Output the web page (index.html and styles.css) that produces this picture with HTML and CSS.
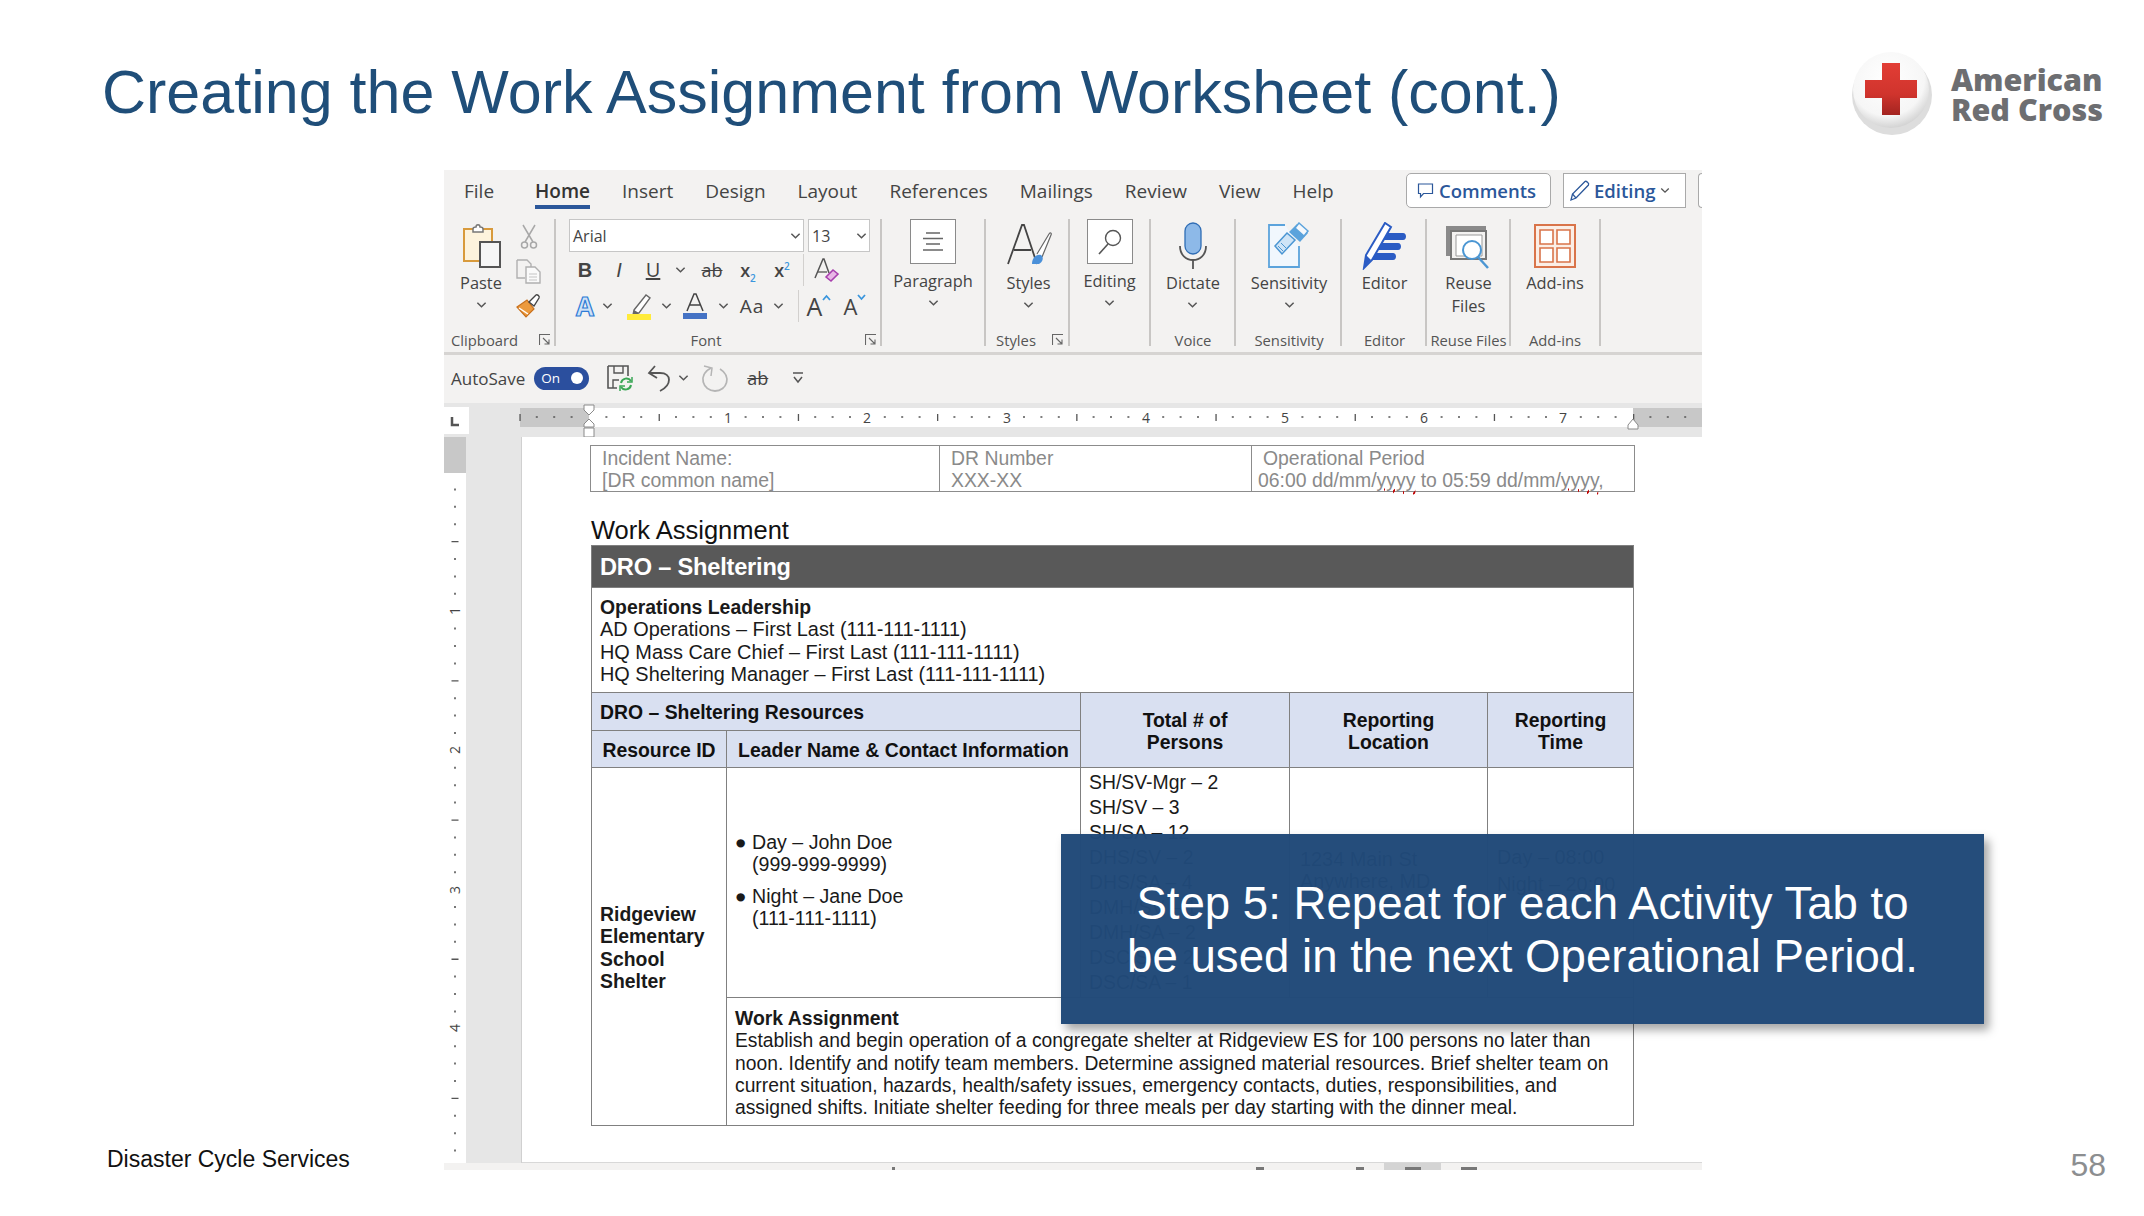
FILE: index.html
```html
<!DOCTYPE html>
<html lang="en">
<head>
    <meta charset="UTF-8">
    <title>Creating the Work Assignment from Worksheet (cont.)</title>
    <link rel="stylesheet" href="styles.css">
</head>
<body>
<svg class="defs" width="0" height="0">
    <symbol id="chev" viewBox="0 0 12 8"><path d="M1.5 1.5 6 6l4.5-4.5" fill="none" stroke="#555" stroke-width="1.6"/></symbol>
    <symbol id="launch" viewBox="0 0 12 12"><path d="M.5 11V.5H11M4 4l6 6M10 5.5V10H5.5" fill="none" stroke="#666" stroke-width="1.1"/></symbol>
</svg>
<div class="slide">
    <header class="slide-top">
        <h1>Creating the Work Assignment from Worksheet (cont.)</h1>
        <div class="logo">
            <svg width="92" height="92" viewBox="0 0 92 92">
                <defs>
                    <radialGradient id="ball" cx="45%" cy="35%" r="70%"><stop offset="0" stop-color="#fff"/><stop offset=".7" stop-color="#f6f6f6"/><stop offset="1" stop-color="#c9c9c9"/></radialGradient>
                    <linearGradient id="red" x1="0" y1="0" x2="0" y2="1"><stop offset="0" stop-color="#e23d35"/><stop offset=".6" stop-color="#d0342d"/><stop offset="1" stop-color="#a32420"/></linearGradient>
                </defs>
                <ellipse cx="46" cy="50" rx="40" ry="40" fill="#ddd"/>
                <circle cx="45" cy="45" r="38" fill="url(#ball)"/>
                <path d="M36 18h18v17h17v18H54v17H36V53H19V35h17z" fill="url(#red)"/>
            </svg>
            <div class="logo-name">American<br>Red Cross</div>
        </div>
    </header>

    <div class="footer-note">Disaster Cycle Services</div>

    <section class="word">
        <nav class="tabs">
            <span class="tab tab-file">File</span>
            <span class="tab tab-home">Home</span>
            <span class="tab">Insert</span>
            <span class="tab">Design</span>
            <span class="tab">Layout</span>
            <span class="tab">References</span>
            <span class="tab">Mailings</span>
            <span class="tab">Review</span>
            <span class="tab">View</span>
            <span class="tab">Help</span>
            <span class="pill pill-comments">
                <svg width="17" height="17" viewBox="0 0 17 17"><path d="M1.5 2h14v9.500H6.500L3.500 15v-3.500h-2z" fill="none" stroke="#2b579a" stroke-width="1.2"/></svg>
                Comments
            </span>
            <span class="pill pill-editing">
                <svg width="24" height="24" viewBox="0 0 24 24"><path d="M3 21l1.500-6L17 2.500c1-1 4.500 2 3.500 3.500L8 19z" fill="none" stroke="#2b579a" stroke-width="1.3"/><path d="M4.500 15 8 19" stroke="#2b579a" stroke-width="1.2"/></svg>
                Editing
                <svg class="chev-sm" width="10" height="7"><use href="#chev"/></svg>
            </span>
            <span class="pill-stub"></span>
        </nav>

        <div class="ribbon">
            <div class="group group-clip">
                <div class="group-body clip-body">
                    <div class="big">
                        <svg width="42" height="48" viewBox="0 0 42 48">
                            <path d="M4 7h28v32H4z" fill="#fdf3dd" stroke="#d89a3c" stroke-width="2"/>
                            <path d="M13 7c0-2 2-2 3-2 0-3 4-3 4 0 1 0 3 0 3 2v3H13z" fill="#fff" stroke="#777" stroke-width="1.500"/>
                            <path d="M20 20h20v25H20z" fill="#f6f6f6" stroke="#555" stroke-width="2"/>
                        </svg>
                        <span class="big-label">Paste</span>
                        <svg class="chev" width="11" height="8"><use href="#chev"/></svg>
                    </div>
                    <div class="clip-stack">
                        <svg width="18" height="26" viewBox="0 0 18 26"><path d="M3 1l10 17M15 1 5 18" fill="none" stroke="#a8a8a8" stroke-width="1.500"/><circle cx="4.500" cy="21" r="3" fill="none" stroke="#a8a8a8" stroke-width="1.500"/><circle cx="13.500" cy="21" r="3" fill="none" stroke="#a8a8a8" stroke-width="1.500"/></svg>
                        <svg width="25" height="25" viewBox="0 0 25 25"><path d="M1 1h10l4 4v4M1 1v18h8" fill="none" stroke="#b0b0b0" stroke-width="1.400"/><path d="M10 8h9l5 5v11H10z" fill="#fafafa" stroke="#b0b0b0" stroke-width="1.400"/><path d="M13 15h8M13 18h8M13 21h8" stroke="#c4c4c4"/></svg>
                        <svg width="25" height="25" viewBox="0 0 25 25"><path d="M1 14 11 7l7 9-8 8z" fill="#ec9a3d" stroke="#c8701c" stroke-width="1.200"/><path d="M3 15l9 6" stroke="#fff" stroke-width="1.500"/><path d="M13 9l7-7c1-1 4 1 3 3l-5 8z" fill="#fff" stroke="#444" stroke-width="1.400"/></svg>
                    </div>
                </div>
                <div class="group-label clip-label">Clipboard<svg class="launch" width="12" height="12"><use href="#launch"/></svg></div>
            </div>

            <div class="group group-font">
                <div class="group-body font-body">
                    <div class="combo-row">
                        <span class="combo combo-name">Arial<svg width="11" height="8"><use href="#chev"/></svg></span>
                        <span class="combo combo-size">13<svg width="11" height="8"><use href="#chev"/></svg></span>
                    </div>
                    <div class="font-row row-a">
                        <span class="glyph bold">B</span>
                        <span class="glyph ital">I</span>
                        <span class="glyph under">U</span>
                        <svg width="11" height="8"><use href="#chev"/></svg>
                        <span class="glyph strike">ab</span>
                        <span class="glyph subs">x<sub>2</sub></span>
                        <span class="glyph subs">x<sup>2</sup></span>
                        <i class="mini-sep"></i>
                        <svg width="26" height="26" viewBox="0 0 26 26"><path d="M1 21 9 2h1l5 14" fill="none" stroke="#555" stroke-width="1.500"/><path d="M4 15h9" stroke="#555" stroke-width="1.300"/><path d="M12 20l7-7 5 4-7 7z" fill="#e8b7e6" stroke="#a83fae" stroke-width="1.600"/></svg>
                    </div>
                    <div class="font-row row-b">
                        <span class="glyph fx-a">A</span>
                        <svg width="11" height="8"><use href="#chev"/></svg>
                        <svg class="hl" width="26" height="28" viewBox="0 0 26 28"><path d="M7 18 19 3l4 3-11 15-6 2z" fill="#fff" stroke="#666" stroke-width="1.400"/><path d="M7 18l5 3-6 2z" fill="#666"/><rect y="22" width="24" height="6" fill="#ffeb3b"/></svg>
                        <svg width="11" height="8"><use href="#chev"/></svg>
                        <svg width="26" height="26" viewBox="0 0 26 26"><path d="M5 18 12 1h2l7 17M8 12h10" fill="none" stroke="#444" stroke-width="1.500"/><rect x="1" y="20" width="24" height="6" fill="#4472c4"/></svg>
                        <svg width="11" height="8"><use href="#chev"/></svg>
                        <span class="glyph aa">Aa</span>
                        <svg width="11" height="8"><use href="#chev"/></svg>
                        <i class="mini-sep"></i>
                        <span class="glyph grow">A<svg width="9" height="7" viewBox="0 0 9 7"><path d="M1 6l3.500-4L8 6" fill="none" stroke="#3a96dd" stroke-width="1.800"/></svg></span>
                        <span class="glyph shrink">A<svg width="9" height="7" viewBox="0 0 9 7"><path d="M1 1l3.500 4L8 1" fill="none" stroke="#3a96dd" stroke-width="1.800"/></svg></span>
                    </div>
                </div>
                <div class="group-label font-label">Font<svg class="launch" width="12" height="12"><use href="#launch"/></svg></div>
            </div>

            <div class="group group-para">
                <div class="group-body">
                    <div class="box-btn">
                        <svg width="22" height="22" viewBox="0 0 22 22"><path d="M4 2h14M1 7.500h20M4 13h14M1 19h20" stroke="#666" stroke-width="1.600"/></svg>
                    </div>
                    <span class="big-label boxed">Paragraph</span>
                    <svg class="chev" width="11" height="8"><use href="#chev"/></svg>
                </div>
                <div class="group-label"></div>
            </div>

            <div class="group group-styles">
                <div class="group-body">
                    <div class="big">
                        <svg width="46" height="48" viewBox="0 0 46 48"><path d="M2 42 16 3h2l13 39M8 28h17" fill="none" stroke="#444" stroke-width="1.800"/><path d="M31 32 43 12c1-2 3-1 2 1L36 35" fill="#fff" stroke="#666" stroke-width="1.200"/><path d="M26 42c0-6 4-10 9-9 3 2 2 7-2 9z" fill="#4a90d9"/></svg>
                        <span class="big-label">Styles</span>
                        <svg class="chev" width="11" height="8"><use href="#chev"/></svg>
                    </div>
                </div>
                <div class="group-label styles-label">Styles<svg class="launch" width="12" height="12"><use href="#launch"/></svg></div>
            </div>

            <div class="group group-edit">
                <div class="group-body">
                    <div class="box-btn">
                        <svg width="26" height="28" viewBox="0 0 26 28"><circle cx="16" cy="10" r="7.500" fill="none" stroke="#555" stroke-width="1.400"/><path d="M11 16 2 26" stroke="#555" stroke-width="1.600"/></svg>
                    </div>
                    <span class="big-label boxed">Editing</span>
                    <svg class="chev" width="11" height="8"><use href="#chev"/></svg>
                </div>
                <div class="group-label"></div>
            </div>

            <div class="group group-voice">
                <div class="group-body">
                    <div class="big">
                        <svg width="30" height="48" viewBox="0 0 30 48"><rect x="7" y="1" width="16" height="31" rx="8" fill="#8db9e8" stroke="#2f6db5" stroke-width="1.300"/><path d="M2 24c0 9 6 14 13 14s13-5 13-14" fill="none" stroke="#555" stroke-width="1.800"/><path d="M15 38v9" stroke="#555" stroke-width="1.800"/></svg>
                        <span class="big-label">Dictate</span>
                        <svg class="chev" width="11" height="8"><use href="#chev"/></svg>
                    </div>
                </div>
                <div class="group-label">Voice</div>
            </div>

            <div class="group group-sens">
                <div class="group-body">
                    <div class="big">
                        <svg width="44" height="48" viewBox="0 0 44 48"><path d="M18 3H2v42h30V24" fill="#f1f7fd" stroke="#5ba3dc" stroke-width="1.800"/><path d="M8 24 20 11l8 7-13 14z" fill="#cfe4f6" stroke="#4b96d3" stroke-width="1.500"/><path d="M11 24l5 5M14 21l5 5" stroke="#4b96d3"/><path d="M22 10 30 2l11 9-8 9z" fill="#5ba3dc"/><path d="M32 1l9 8-4 5-9-8z" fill="#f4f8fc" stroke="#5ba3dc" stroke-width="1.500"/></svg>
                        <span class="big-label">Sensitivity</span>
                        <svg class="chev" width="11" height="8"><use href="#chev"/></svg>
                    </div>
                </div>
                <div class="group-label">Sensitivity</div>
            </div>

            <div class="group group-editor">
                <div class="group-body">
                    <div class="big">
                        <svg width="46" height="48" viewBox="0 0 46 48"><path d="M2 46 4 33 23 1l6 4L10 38z" fill="#fff" stroke="#2b5cc4" stroke-width="2"/><path d="M2 46l7-8-5-5z" fill="#2b5cc4"/><path d="M26 11h15c4 0 4 7 0 7H22zM20 21h16c4 0 4 7 0 7H16zM14 31h17c4 0 4 7 0 7H10z" fill="#2b5cc4"/></svg>
                        <span class="big-label">Editor</span>
                    </div>
                </div>
                <div class="group-label">Editor</div>
            </div>

            <div class="group group-reuse">
                <div class="group-body">
                    <div class="big">
                        <svg width="46" height="48" viewBox="0 0 46 48"><path d="M1 4h40v4H5v26H1z" fill="#8a8a8a"/><path d="M6 9h35v28H6z" fill="#f3f2f1" stroke="#777" stroke-width="2"/><path d="M11 13h26v21H11z" fill="#fff" stroke="#999"/><circle cx="27" cy="28" r="9" fill="#fff" stroke="#4b96d3" stroke-width="2"/><path d="M33 35l10 11" stroke="#4b96d3" stroke-width="2.500"/></svg>
                        <span class="big-label">Reuse<br>Files</span>
                    </div>
                </div>
                <div class="group-label">Reuse Files</div>
            </div>

            <div class="group group-addins">
                <div class="group-body">
                    <div class="big">
                        <svg class="addins-icon" width="42" height="44" viewBox="0 0 42 44"><path d="M1 1h40v42H1z" fill="#fbeee6" stroke="#d9744a" stroke-width="2"/><path d="M6 6h13v14H6zM23 6h13v14H23zM6 24h13v14H6zM23 24h13v14H23z" fill="#fff" stroke="#d9744a" stroke-width="1.600"/></svg>
                        <span class="big-label">Add-ins</span>
                    </div>
                </div>
                <div class="group-label">Add-ins</div>
            </div>
        </div>

        <div class="qat">
            <span class="qat-name">AutoSave</span>
            <span class="toggle">On<i></i></span>
            <svg class="q-save" width="28" height="28" viewBox="0 0 28 28"><path d="M2 2h20v10M2 2v22h9" fill="none" stroke="#555" stroke-width="1.600"/><path d="M8 2v7h9V2M7 24v-8h6" fill="none" stroke="#555" stroke-width="1.400"/><path d="M15 19a5.500 5.500 0 0 1 10-2M25 21a5.500 5.500 0 0 1-10 2" fill="none" stroke="#3aa655" stroke-width="2"/><path d="M26 13v5h-5M14 27v-5h5" fill="none" stroke="#3aa655" stroke-width="1.500"/></svg>
            <svg class="q-undo" width="26" height="28" viewBox="0 0 26 28"><path d="M8 2 2 9l8 5" fill="none" stroke="#555" stroke-width="1.800"/><path d="M2 9h11c12 0 12 12 0 18" fill="none" stroke="#555" stroke-width="1.800"/></svg>
            <svg class="q-chev" width="11" height="8"><use href="#chev"/></svg>
            <svg class="q-redo" width="28" height="28" viewBox="0 0 28 28"><path d="M10 4c-14 7-8 23 4 23s17-15 5-22" fill="none" stroke="#b5b5b5" stroke-width="1.800"/><path d="M3 2l8 2-1 8" fill="none" stroke="#b5b5b5" stroke-width="1.500"/></svg>
            <span class="glyph strike q-ab">ab</span>
            <svg class="q-more" width="12" height="14" viewBox="0 0 12 14"><path d="M1 2h10M2 6l4 5 4-5" fill="none" stroke="#555" stroke-width="1.500"/></svg>
        </div>

        <svg class="h-ruler" width="1258" height="34" viewBox="0 0 1258 34">
            <rect x="0" y="4" width="25" height="27" fill="#fff"/>
            <path d="M8 14v8h7" fill="none" stroke="#555" stroke-width="2.500"/>
            <rect x="76" y="5" width="69" height="19" fill="#c8c8c8"/>
            <rect x="145" y="5" width="1044" height="19" fill="#fff"/>
            <rect x="1189" y="5" width="69" height="19" fill="#c8c8c8"/>
            <line x1="91.800" y1="14" x2="1258" y2="14" stroke="#555" stroke-width="1.600" stroke-dasharray="2 15.400 2 15.400 2 32.800"/>
            <line x1="75.400" y1="14.500" x2="1258" y2="14.500" stroke="#555" stroke-width="7" stroke-dasharray="1.300 137.900"/>
            <g class="ruler-num" text-anchor="middle">
                <text x="284" y="20">1</text><text x="423" y="20">2</text><text x="563" y="20">3</text><text x="702" y="20">4</text><text x="841" y="20">5</text><text x="980" y="20">6</text><text x="1119" y="20">7</text>
            </g>
            <path d="M140 2h10v5l-5 5-5-5zM145 16l5 5v3h-10v-3zM140 25h10v9h-10z" fill="#fff" stroke="#8a8a8a"/>
            <path d="M1189 16l5 6v4h-10v-4z" fill="#fff" stroke="#8a8a8a"/>
        </svg>

        <div class="doc-area">
            <svg class="v-ruler" width="22" height="726" viewBox="0 0 22 726">
                <rect width="22" height="36" fill="#c8c8c8"/>
                <line x1="11" y1="51.400" x2="11" y2="726" stroke="#555" stroke-width="1.600" stroke-dasharray="2 15.400 2 15.400 2 32.800"/>
                <line x1="11" y1="104" x2="11" y2="726" stroke="#555" stroke-width="7" stroke-dasharray="1.300 137.900"/>
                <g class="ruler-num" text-anchor="middle">
                    <text transform="translate(16 174) rotate(-90)">1</text><text transform="translate(16 313) rotate(-90)">2</text><text transform="translate(16 453) rotate(-90)">3</text><text transform="translate(16 591) rotate(-90)">4</text>
                </g>
            </svg>
            <div class="gutter"></div>
            <div class="page">
                <table class="incident">
                    <tr>
                        <td class="inc-a">Incident Name:<br>[DR common name]</td>
                        <td class="inc-b">DR Number<br>XXX-XX</td>
                        <td class="inc-c">Operational Period<br><span class="shift">06:00 dd/mm/<u>yyyy</u> to 05:59 dd/mm/<u>yyyy</u>,</span></td>
                    </tr>
                </table>
                <h2>Work Assignment</h2>
                <table class="assign">
                    <colgroup><col class="c1"><col class="c2"><col class="c3"><col class="c4"><col class="c5"></colgroup>
                    <tr class="r-title"><td colspan="5">DRO – Sheltering</td></tr>
                    <tr class="r-lead">
                        <td colspan="5"><b>Operations Leadership</b><br>AD Operations – First Last (111-111-1111)<br>HQ Mass Care Chief – First Last (111-111-1111)<br>HQ Sheltering Manager – First Last (111-111-1111)</td>
                    </tr>
                    <tr class="r-head1">
                        <th colspan="2" class="left">DRO – Sheltering Resources</th>
                        <th rowspan="2">Total # of<br>Persons</th>
                        <th rowspan="2">Reporting<br>Location</th>
                        <th rowspan="2">Reporting<br>Time</th>
                    </tr>
                    <tr class="r-head2"><th>Resource ID</th><th>Leader Name &amp; Contact Information</th></tr>
                    <tr class="r-main">
                        <td rowspan="2" class="site"><b>Ridgeview<br>Elementary<br>School<br>Shelter</b></td>
                        <td class="leaders">
                            <ul>
                                <li>Day – John Doe<br>(999-999-9999)</li>
                                <li>Night – Jane Doe<br>(111-111-1111)</li>
                            </ul>
                        </td>
                        <td class="persons">SH/SV-Mgr – 2<br>SH/SV – 3<br>SH/SA – 12<br>DHS/SV – 2<br>DHS/SA – 4<br>DMH/SV – 1<br>DMH/SA – 2<br>DSC/SV – 2<br>DSC/SA – 1</td>
                        <td class="where">1234 Main St<br>Anywhere, MD</td>
                        <td class="when">Day – 08:00<br><br>Night – 20:00</td>
                    </tr>
                    <tr class="r-work">
                        <td colspan="4"><b>Work Assignment</b><br>Establish and begin operation of a congregate shelter at Ridgeview ES for 100 persons no later than<br>noon. Identify and notify team members. Determine assigned material resources. Brief shelter team on<br>current situation, hazards, health/safety issues, emergency contacts, duties, responsibilities, and<br>assigned shifts. Initiate shelter feeding for three meals per day starting with the dinner meal.</td>
                    </tr>
                </table>
            </div>
        </div>

        <div class="statusbar">
            <i class="st st-a"></i><i class="st st-b"></i><i class="st st-c"></i><span class="st-on"><i></i></span><i class="st st-d"></i>
        </div>
    </section>

    <div class="page-no">58</div>

    <aside class="callout">Step 5: Repeat for each Activity Tab to<br>be used in the next Operational Period.</aside>
</div>
</body>
</html>
```

FILE: styles.css
```css
* {
    box-sizing: border-box;
}

body {
    margin: 0;
    background-color: #fff;
    font-family: "Liberation Sans", Arial, sans-serif;
}

.defs {
    position: absolute;
}

.slide {
    position: relative;
    width: 2144px;
    height: 1216px;
    overflow: hidden;
    display: grid;
    grid-template-columns: 444px 1258px 1fr;
    grid-template-rows: 170px 1000px 1fr;
}

.slide-top {
    grid-column: 1 / 4;
    display: flex;
    align-items: flex-start;
    justify-content: space-between;
}

h1 {
    margin: 56px 0 0 102px;
    font-size: 61px;
    font-weight: 400;
    line-height: 72px;
    color: #1f4e79;
}

.logo {
    display: flex;
    align-items: flex-start;
    margin: 45px 41px 0 0;
}

.logo svg {
    display: block;
}

.logo-name {
    margin: 19px 0 0 13px;
    font-family: "Open Sans", sans-serif;
    font-size: 30.5px;
    font-weight: 800;
    line-height: 30px;
    color: #6d6e71;
}

.footer-note {
    align-self: end;
    padding-left: 107px;
    font-size: 23px;
    line-height: 28px;
    color: #111;
    margin-bottom: -3px;
}

.page-no {
    align-self: end;
    justify-self: end;
    margin: 0 38px -13px 0;
    font-size: 32px;
    line-height: 36px;
    color: #8c8e90;
}

/* word window */
.word {
    background-color: #f3f2f1;
    font-family: "Open Sans", sans-serif;
    color: #444;
    display: flex;
    flex-direction: column;
    overflow: hidden;
}

.tabs {
    height: 49px;
    padding-bottom: 8px;
    font-size: 19px;
    display: flex;
    align-items: center;
    gap: 32px;
}

.tab-file { margin-left: 20px; margin-right: 9px; }
.tab-home { font-weight: 600; color: #333; position: relative; }

.tab-home::after {
    content: "";
    position: absolute;
    left: 0;
    right: 0;
    bottom: -5px;
    height: 4px;
    background-color: #2b579a;
}

.pill {
    display: flex;
    align-items: center;
    gap: 5px;
    height: 35px;
    background-color: #fff;
    border: 1px solid #a9a9a9;
    color: #2b579a;
    font-weight: 600;
    font-size: 18.5px;
}

.pill-comments {
    margin-left: auto;
    width: 145px;
    padding-left: 10px;
    border-radius: 5px;
}

.pill-editing {
    margin-left: -20px;
    width: 123px;
    padding-left: 4px;
    gap: 2px;
}

.chev-sm {
    margin-left: 3px;
}

.pill-stub {
    width: 4px;
    height: 35px;
    margin-left: -20px;
    border: 1px solid #a9a9a9;
    border-right: 0;
    border-radius: 5px 0 0 5px;
    background-color: #fff;
}

.ribbon {
    display: flex;
    height: 136px;
    padding-bottom: 6px;
    border-bottom: 3px solid #d6d4d2;
    font-size: 16.4px;
}

.group {
    display: flex;
    flex-direction: column;
    align-items: center;
    border-right: 2px solid #c8c6c4;
}

.group-clip { width: 112px; }
.group-font { width: 326px; }
.group-para { width: 104px; }
.group-styles { width: 84px; }
.group-edit { width: 81px; }
.group-voice { width: 85px; padding-left: 1px; }
.group-sens { width: 106px; padding-left: 2px; }
.group-editor { width: 85px; padding-left: 2px; }
.group-reuse { width: 84px; padding-left: 1px; }
.group-addins { width: 90px; }

.group-body {
    flex: 1;
    width: 100%;
    display: flex;
    flex-direction: column;
    align-items: center;
}

.group-label {
    position: relative;
    height: 12px;
    width: 100%;
    font-size: 14.8px;
    line-height: 12px;
    text-align: center;
    white-space: nowrap;
    color: #555;
}

.launch {
    position: absolute;
    right: 3px;
    top: 0;
}

.clip-label {
    text-align: left;
    padding-left: 7px;
}

.font-label {
    padding-right: 24px;
}

.styles-label {
    padding-right: 22px;
}

.styles-label .launch {
    right: 4px;
}

.big {
    display: flex;
    flex-direction: column;
    align-items: center;
    padding-top: 3px;
}

.big svg {
    display: block;
}

.big .addins-icon {
    margin: 2px 0;
}

.big-label {
    margin-top: 0.5px;
    line-height: 23px;
    text-align: center;
    white-space: nowrap;
}

.big-label.boxed {
    margin-top: 5px;
}

.chev {
    margin-top: 7px;
}

.group-styles .big {
    padding-left: 3px;
}

.box-btn {
    width: 46px;
    height: 45px;
    background-color: #fff;
    border: 1px solid #8a8a8a;
    display: flex;
    align-items: center;
    justify-content: center;
}

.clip-body {
    flex-direction: row;
    align-items: flex-start;
    padding-left: 16px;
}

.clip-stack {
    display: flex;
    flex-direction: column;
    align-items: center;
    gap: 9px;
    margin: 5px 0 0 14px;
}

.font-body {
    align-items: flex-start;
    padding-left: 13px;
}

.combo-row {
    display: flex;
    gap: 4px;
}

.combo {
    display: flex;
    align-items: center;
    justify-content: space-between;
    height: 33px;
    padding: 0 2px 0 3px;
    background-color: #fff;
    border: 1px solid #c6c6c6;
    font-size: 16px;
}

.combo-name { width: 235px; }
.combo-size { width: 62px; }

.font-row {
    display: grid;
    align-items: center;
    justify-items: center;
    height: 35px;
}

.row-a {
    grid-template-columns: 32px 36px 32px 22px 42px 30px 38px 4px 44px;
}

.row-b {
    grid-template-columns: 32px 12px 46px 14px 44px 12px 46px 6px 21px 34px 38px;
    margin-top: 1px;
}

.row-b .hl {
    margin-left: 8px;
}

.row-b .mini-sep {
    justify-self: end;
    margin-right: 3px;
}

.mini-sep {
    width: 1px;
    height: 32px;
    background-color: #d2d0ce;
}

.glyph {
    font-size: 20px;
    line-height: 24px;
    color: #444;
}

.glyph.bold { font-weight: 700; font-family: "Liberation Sans", sans-serif; }
.glyph.ital { font-style: italic; font-family: "Liberation Sans", sans-serif; }
.glyph.under { text-decoration: underline; }
.glyph.strike { text-decoration: line-through; font-size: 18px; }
.glyph.subs { font-weight: 600; font-size: 18px; }

.glyph sub,
.glyph sup {
    font-size: 10px;
    color: #3a96dd;
    line-height: 0;
}

.glyph.fx-a {
    font-size: 26px;
    font-weight: 700;
    color: #cfe2f6;
    -webkit-text-stroke: 1.2px #2e7cd6;
}

.glyph.aa { font-size: 19px; letter-spacing: 1px; }

.glyph.grow,
.glyph.shrink {
    display: flex;
    align-items: flex-start;
    font-size: 25px;
    font-weight: 400;
}

.glyph.shrink { font-size: 22px; }

.qat {
    height: 48px;
    padding-bottom: 2px;
    display: flex;
    align-items: center;
    font-size: 17px;
}

.qat-name { margin-left: 7px; }

.toggle {
    display: flex;
    align-items: center;
    justify-content: space-between;
    width: 55px;
    height: 23px;
    margin-left: 9px;
    padding: 0 6px 0 7px;
    border-radius: 12px;
    background-color: #2b4f9e;
    color: #fff;
    font-size: 13.5px;
}

.toggle i {
    width: 12px;
    height: 12px;
    border-radius: 50%;
    background-color: #fff;
}

.q-save { margin-left: 17px; }
.q-undo { margin-left: 13px; }
.q-chev { margin-left: 5px; }
.q-redo { margin-left: 12px; }
.q-ab { margin-left: 18px; }
.q-more { margin-left: 24px; }

.h-ruler {
    display: block;
    flex: none;
    background-color: #e6e6e6;
}

.ruler-num {
    font-family: "Open Sans", sans-serif;
    font-size: 14px;
    fill: #444;
}

.doc-area {
    display: flex;
    height: 726px;
    flex: none;
}

.v-ruler {
    display: block;
    flex: none;
    background-color: #fff;
}

.gutter {
    width: 56px;
    flex: none;
    background-color: #e6e6e6;
    border-right: 1px solid #d0d0d0;
}

.page {
    flex: 1;
    background-color: #fff;
    padding: 8px 0 0 68px;
    border-bottom: 1px solid #d8d8d8;
    font-family: "Liberation Sans", Arial, sans-serif;
    color: #1a1a1a;
    overflow: hidden;
}

table {
    border-collapse: collapse;
    table-layout: fixed;
}

.incident {
    width: 1045px;
    height: 44px;
    color: #8a8a8a;
    font-size: 19.4px;
    line-height: 22px;
}

.incident td {
    border: 1.5px solid #8c8c8c;
    padding: 1px 0 0 11px;
    vertical-align: top;
    white-space: nowrap;
}

.inc-a { width: 349px; }
.inc-b { width: 312px; }

.shift {
    margin-left: -5px;
}

.incident u {
    text-decoration: underline wavy #c00000 1.5px;
}

h2 {
    margin: 24px 0 0 1px;
    font-size: 25.5px;
    font-weight: 400;
    line-height: 29px;
    color: #111;
}

.assign {
    width: 1043px;
    margin-left: 1px;
    font-size: 19.9px;
    line-height: 22.300px;
}

.assign b {
    font-size: 19.4px;
}

.assign td,
.assign th {
    border: 1.5px solid #808080;
    padding: 0 0 0 8px;
    white-space: nowrap;
    overflow: hidden;
}

.c1 { width: 135px; }
.c2 { width: 354px; }
.c3 { width: 209px; }
.c4 { width: 198px; }

.r-title td {
    height: 42px;
    padding-top: 2px;
    background-color: #595959;
    color: #fff;
    font-size: 23.6px;
    font-weight: 700;
    letter-spacing: -0.2px;
}

.r-lead td {
    height: 105px;
    padding-top: 8px;
    vertical-align: top;
}

.assign th {
    background-color: #d9e0f1;
    color: #111;
    font-size: 19.4px;
    text-align: center;
    padding: 2px 0 0;
}

.r-head1 th.left {
    height: 38px;
    text-align: left;
    padding-left: 8px;
}

.r-head2 th {
    height: 37px;
}

.r-main td {
    height: 230px;
    vertical-align: top;
}

.site {
    vertical-align: middle !important;
    padding-top: 2px !important;
}

.leaders ul {
    margin: 0;
    padding: 63px 0 0 17px;
    list-style-type: "● ";
    font-size: 19.6px;
}

.leaders li + li {
    margin-top: 9px;
}

.persons {
    font-size: 19.4px;
    line-height: 25px;
    padding-top: 2px !important;
}

.where {
    padding: 80px 0 0 10px !important;
}

.when {
    padding: 83px 0 0 9px !important;
    line-height: 13.500px;
}

.r-work td {
    height: 128px;
    padding-top: 9px;
    vertical-align: top;
    font-size: 19.3px;
}

.statusbar {
    height: 7px;
    display: flex;
    align-items: flex-end;
    overflow: hidden;
}

.st {
    width: 8px;
    height: 3px;
    background-color: #777;
}

.st-a { margin-left: 448px; width: 3px; }
.st-b { margin-left: 361px; }
.st-c { margin-left: 92px; }
.st-d { margin-left: 20px; width: 16px; }

.st-on {
    width: 57px;
    margin-left: 20px;
    height: 7px;
    display: flex;
    align-items: flex-end;
    justify-content: center;
    background-color: #d4d4d4;
}

.st-on i {
    width: 16px;
    height: 3px;
    background-color: #777;
}

/* blue overlay on top of the screenshot */
.callout {
    position: absolute;
    left: 1061px;
    top: 834px;
    width: 923px;
    height: 190px;
    padding-top: 2px;
    display: flex;
    align-items: center;
    justify-content: center;
    text-align: center;
    background-color: rgba(33, 73, 120, 0.98);
    box-shadow: 5px 6px 9px rgba(0, 0, 0, 0.35);
    color: #fff;
    font-size: 45.6px;
    line-height: 53px;
}
```
